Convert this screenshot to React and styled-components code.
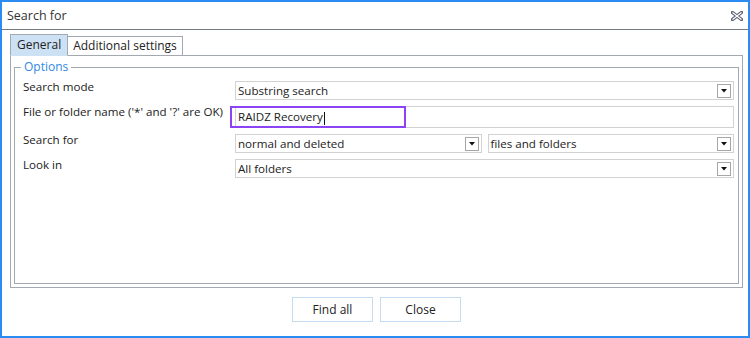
import React from 'react';
import styled, { createGlobalStyle } from 'styled-components';

const GlobalStyle = createGlobalStyle`
  body {
    margin: 0;
    background: #ffffff;
    font-family: "Open Sans", "Liberation Sans", sans-serif;
  }
`;

const lineGray = '#a3a9b0';
const fieldGray = '#d2d2d2';

const Window = styled.div`
  width: 750px;
  height: 338px;
  box-sizing: border-box;
  border: 2px solid #2a8cf2;
  background: #fff;
  display: flex;
  flex-direction: column;
  color: #222;
`;

const TitleBar = styled.div`
  height: 27px;
  flex: none;
  border-bottom: 1px solid #737a82;
  display: flex;
  align-items: center;
  justify-content: space-between;
  padding: 0 4px 0 5px;
`;

const Title = styled.span`
  font-size: 12.5px;
  color: #333;
`;

const CloseButton = styled.button`
  border: none;
  background: none;
  padding: 0;
  width: 14px;
  height: 14px;
  display: flex;
  align-items: center;
  justify-content: center;
  margin-top: 1px;
`;

const Body = styled.div`
  flex: 1;
  display: flex;
  flex-direction: column;
  padding: 4px 5px 0 8px;
`;

const TabStrip = styled.div`
  display: flex;
  align-items: flex-end;
  height: 22px;
  margin-bottom: -1px;
  position: relative;
  z-index: 1;
`;

const Tab = styled.div`
  box-sizing: border-box;
  height: ${(p) => (p.$active ? '22px' : '20px')};
  padding: 0 ${(p) => (p.$active ? '6px' : '5px')};
  border: 1px solid ${lineGray};
  border-bottom-color: ${(p) => (p.$active ? '#cde1f5' : lineGray)};
  background: ${(p) => (p.$active ? '#cde1f5' : '#fff')};
  font-size: 12px;
  line-height: 18px;
  display: flex;
  align-items: center;
  & + & { border-left: none; }
`;

const Panel = styled.div`
  height: 233px;
  box-sizing: border-box;
  border: 1px solid ${lineGray};
  padding: 4px 3px 3px 3px;
  display: flex;
`;

const Group = styled.fieldset`
  flex: 1;
  min-width: 0;
  margin: 0;
  border: 1px solid ${lineGray};
  padding: 7px 4px 0 8px;
`;

const Legend = styled.legend`
  font-size: 12px;
  line-height: 14px;
  color: #2f88e6;
  padding: 0 3px;
  margin-left: -2px;
`;

const Rows = styled.div`
  display: flex;
  flex-direction: column;
  gap: 6px;
`;

const Row = styled.div`
  display: grid;
  grid-template-columns: 212px 1fr;
  height: ${(p) => p.$h || 19}px;
`;

const Label = styled.div`
  font-size: 11.6px;
  line-height: 13px;
  margin-top: -1px;
  white-space: nowrap;
`;

const Pair = styled.div`
  display: grid;
  grid-template-columns: 1fr 1fr;
  gap: 6px;
`;

const Field = styled.div`
  position: relative;
  box-sizing: border-box;
  border: 1px solid ${fieldGray};
  display: flex;
  align-items: center;
  padding-left: 2px;
  font-size: 11.6px;
  min-width: 0;
`;

const FieldText = styled.span`
  flex: 1;
  white-space: nowrap;
`;

const DropButton = styled.span`
  width: 14px;
  height: 14px;
  box-sizing: border-box;
  border: 1px solid #a6a6a6;
  margin-right: 2px;
  display: flex;
  align-items: center;
  justify-content: center;
`;

const FocusRing = styled.div`
  position: absolute;
  left: -6px;
  top: -1px;
  width: 176px;
  bottom: -1px;
  box-sizing: border-box;
  border: 2px solid #8b43f4;
`;

const Caret = styled.span`
  display: inline-block;
  width: 1px;
  height: 13px;
  background: #111;
  vertical-align: middle;
  margin-left: 1px;
`;

const Footer = styled.div`
  display: flex;
  justify-content: center;
  gap: 7px;
  padding-top: 9px;
`;

const Button = styled.button`
  width: 81px;
  height: 25px;
  box-sizing: border-box;
  border: 1px solid #c5dbef;
  background: #fff;
  font-family: inherit;
  font-size: 12px;
  color: #222;
  padding: 0;
`;

const Arrow = () => (
  <svg width="6" height="4" viewBox="0 0 6 4">
    <polygon points="0,0 6,0 3,3.5" fill="#111" />
  </svg>
);

const CloseIcon = () => (
  <svg width="12" height="10" viewBox="0 0 12 10">
    <path d="M1.5 1.5 L10.5 8.5 M10.5 1.5 L1.5 8.5" stroke="#5d6475" strokeWidth="3.4" strokeLinecap="square" />
    <path d="M1.5 1.5 L10.5 8.5 M10.5 1.5 L1.5 8.5" stroke="#fff" strokeWidth="1.2" />
  </svg>
);

const Select = ({ value }) => (
  <Field>
    <FieldText>{value}</FieldText>
    <DropButton><Arrow /></DropButton>
  </Field>
);

export default function App() {
  return (
    <>
      <GlobalStyle />
      <Window>
        <TitleBar>
          <Title>Search for</Title>
          <CloseButton><CloseIcon /></CloseButton>
        </TitleBar>
        <Body>
          <TabStrip>
            <Tab $active>General</Tab>
            <Tab>Additional settings</Tab>
          </TabStrip>
          <Panel>
            <Group>
              <Legend>Options</Legend>
              <Rows>
                <Row>
                  <Label>Search mode</Label>
                  <Select value="Substring search" />
                </Row>
                <Row $h={22}>
                  <Label>File or folder name ('*' and '?' are OK)</Label>
                  <Field>
                    <FieldText>RAIDZ Recovery<Caret /></FieldText>
                    <FocusRing />
                  </Field>
                </Row>
                <Row>
                  <Label>Search for</Label>
                  <Pair>
                    <Select value="normal and deleted" />
                    <Select value="files and folders" />
                  </Pair>
                </Row>
                <Row>
                  <Label>Look in</Label>
                  <Select value="All folders" />
                </Row>
              </Rows>
            </Group>
          </Panel>
          <Footer>
            <Button>Find all</Button>
            <Button>Close</Button>
          </Footer>
        </Body>
      </Window>
    </>
  );
}
